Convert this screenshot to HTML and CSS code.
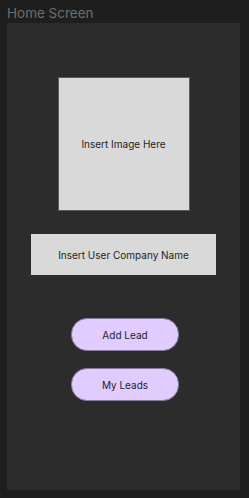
FILE: index.html
```html
<!DOCTYPE html>
<html lang="en">
<head>
  <meta charset="UTF-8">
  <meta name="viewport" content="width=device-width, initial-scale=1.0">
  <link rel="stylesheet" href="styles.css">
  <title>Home Screen</title>
</head>
<body>
  <div class="label">Home Screen</div>
  <div class="screen">
    <div class="image">Insert Image Here</div>
    <div class="company">Insert User Company Name</div>
    <div class="actions">
      <button class="btn">Add Lead</button>
      <button class="btn">My Leads</button>
    </div>
  </div>
</body>
</html>
```

FILE: styles.css
```css
* {
  margin: 0;
  padding: 0;
  box-sizing: border-box;
}

body {
  background-color: #1e1e1e;
  font-family: Inter, "Noto Sans", sans-serif;
  width: 249px;
  height: 498px;
  overflow: hidden;
}

.label {
  height: 23px;
  padding: 4px 0 0 7px;
  font-size: 13.5px;
  line-height: 18px;
  color: #6e6e6e;
}

.screen {
  margin-left: 7px;
  width: 233px;
  height: 467px;
  background-color: #2c2c2c;
  display: flex;
  flex-direction: column;
  align-items: center;
  padding-top: 54px;
}

.image {
  width: 132px;
  height: 134px;
  background: #d9d9d9;
  border: 1px solid #5c5c5c;
  display: flex;
  align-items: center;
  justify-content: center;
  font-size: 10px;
  color: #1e1e1e;
}

.company {
  margin-top: 23px;
  width: 185px;
  height: 41px;
  background: #d9d9d9;
  display: flex;
  align-items: center;
  justify-content: center;
  font-size: 10px;
  color: #1e1e1e;
}

.actions {
  margin-top: 43px;
  display: flex;
  flex-direction: column;
  gap: 17px;
  margin-left: 3px;
}

.btn {
  width: 108px;
  height: 33px;
  border-radius: 16px;
  border: 1px solid #8a7a9e;
  background: #e1ccff;
  font-family: Inter, "Noto Sans", sans-serif;
  font-size: 10px;
  color: #1e1e1e;
}
```
